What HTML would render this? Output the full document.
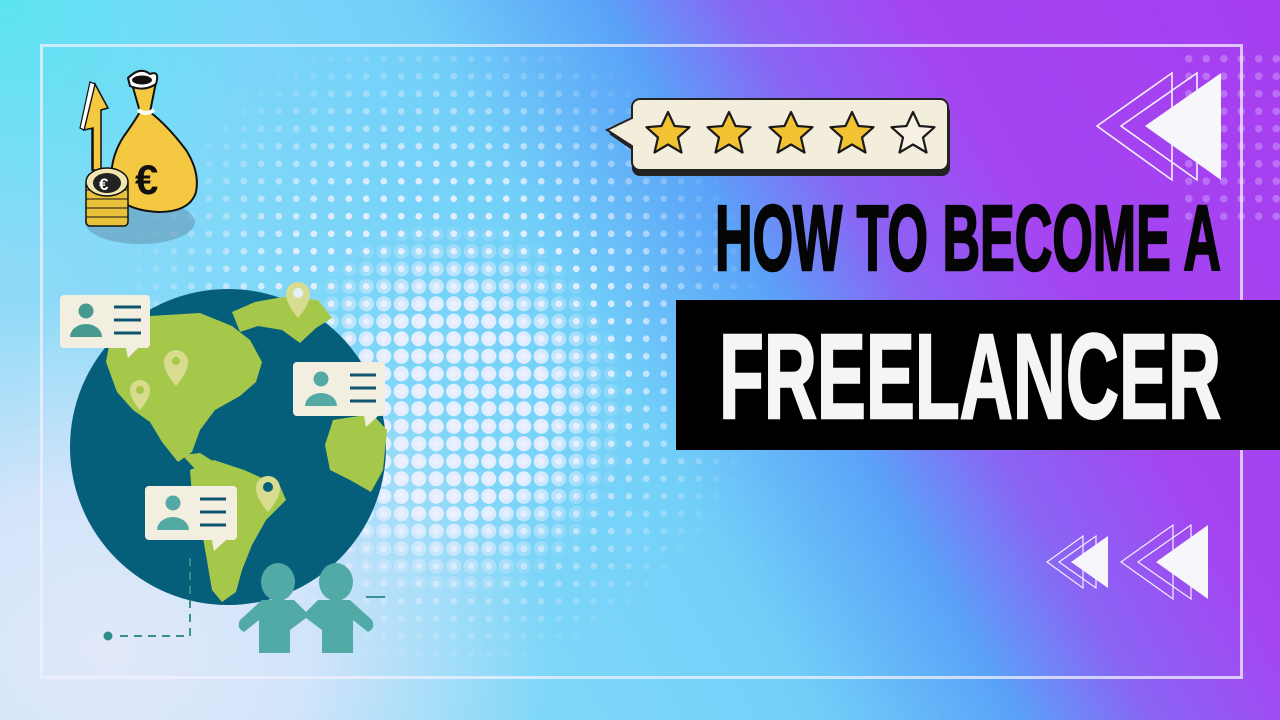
<!DOCTYPE html>
<html><head><meta charset="utf-8"><style>
html,body{margin:0;padding:0}
body{width:1280px;height:720px;overflow:hidden;position:relative;font-family:"Liberation Sans",sans-serif;
background:
radial-gradient(ellipse 440px 360px at 110px 650px, rgba(225,232,250,1) 0%, rgba(222,230,250,.85) 45%, rgba(222,230,250,0) 100%),
radial-gradient(ellipse 260px 260px at 0px 0px, rgba(80,230,240,.8), rgba(80,230,240,0) 100%),
linear-gradient(60deg, #9adcf8 0%, #80d8f8 30%, #72d0f8 48%, #5aa2f8 60%, #8a64f4 68%, #a445f1 78%, #a63ef0 100%);}
.dots{position:absolute;}
#d1{left:130px;top:50px;width:640px;height:670px;
background:radial-gradient(circle at 8.75px 8.75px, rgba(236,240,255,.92) 3px, transparent 3.6px);background-size:17.5px 17.5px;
-webkit-mask-image:radial-gradient(ellipse 330px 330px at 310px 300px,#000 50%,transparent 100%);mask-image:radial-gradient(ellipse 330px 330px at 310px 300px,#000 50%,transparent 100%);}
#d2{left:130px;top:50px;width:640px;height:670px;
background:radial-gradient(circle at 8.75px 8.75px, rgba(236,240,255,.92) 7.2px, transparent 7.9px);background-size:17.5px 17.5px;
-webkit-mask-image:radial-gradient(ellipse 240px 260px at 320px 360px,#000 40%,transparent 75%);mask-image:radial-gradient(ellipse 240px 260px at 320px 360px,#000 40%,transparent 75%);}
#d3{left:1180px;top:50px;width:100px;height:170px;
background:radial-gradient(circle at 8.75px 8.75px, rgba(236,220,255,.3) 3.5px, transparent 4px);background-size:17.5px 17.5px;}
svg{position:absolute;left:0;top:0}
</style></head><body>
<div class="dots" id="d1"></div>
<div class="dots" id="d2"></div>
<div class="dots" id="d3"></div>
<svg width="1280" height="720" viewBox="0 0 1280 720">
<rect x="41.5" y="45.5" width="1200" height="632" fill="none" stroke="rgba(240,240,255,.75)" stroke-width="3"/>
<rect x="676" y="300" width="604" height="150" fill="#000"/>
<text x="715" y="270" font-family="Liberation Sans" font-weight="bold" font-size="93" textLength="506" lengthAdjust="spacingAndGlyphs" fill="#050505" stroke="#050505" stroke-width="2.5">HOW TO BECOME A</text>
<text x="719" y="418" font-family="Liberation Sans" font-weight="bold" font-size="121" textLength="502" lengthAdjust="spacingAndGlyphs" fill="#f5f5f5" stroke="#f5f5f5" stroke-width="2.5">FREELANCER</text>
<g>
<path d="M640 104 H942 a8 8 0 0 1 8 8 V168 a8 8 0 0 1 -8 8 H640 a8 8 0 0 1 -8 -8 V150 L609 134 L632 124 V112 a8 8 0 0 1 8 -8Z" fill="#222"/>
<path d="M640 99 H940 a8 8 0 0 1 8 8 V162 a8 8 0 0 1 -8 8 H640 a8 8 0 0 1 -8 -8 V146 L607 130 L632 118 V107 a8 8 0 0 1 8 -8Z" fill="#f3eddb" stroke="#222" stroke-width="2"/>
<g stroke="#1a1a1a" stroke-width="2.2" stroke-linejoin="round">
<path d="M0 -22 L6.5 -8 L21.5 -6.8 L10 3.5 L13.5 18.5 L0 10.5 L-13.5 18.5 L-10 3.5 L-21.5 -6.8 L-6.5 -8Z" fill="#f2c233" transform="translate(668,134)"/>
<path d="M0 -22 L6.5 -8 L21.5 -6.8 L10 3.5 L13.5 18.5 L0 10.5 L-13.5 18.5 L-10 3.5 L-21.5 -6.8 L-6.5 -8Z" fill="#f2c233" transform="translate(729,134)"/>
<path d="M0 -22 L6.5 -8 L21.5 -6.8 L10 3.5 L13.5 18.5 L0 10.5 L-13.5 18.5 L-10 3.5 L-21.5 -6.8 L-6.5 -8Z" fill="#f2c233" transform="translate(791,134)"/>
<path d="M0 -22 L6.5 -8 L21.5 -6.8 L10 3.5 L13.5 18.5 L0 10.5 L-13.5 18.5 L-10 3.5 L-21.5 -6.8 L-6.5 -8Z" fill="#f2c233" transform="translate(852,134)"/>
<path d="M0 -22 L6.5 -8 L21.5 -6.8 L10 3.5 L13.5 18.5 L0 10.5 L-13.5 18.5 L-10 3.5 L-21.5 -6.8 L-6.5 -8Z" fill="#f6f1e2" transform="translate(913,134)"/>
</g></g>
<g fill="none" stroke="#f4f0ff" stroke-width="1.6">
<path d="M1097 126 L1172 73 L1172 180 Z"/>
<path d="M1121 126 L1197 73 L1197 180 Z"/>
</g>
<path d="M1145 126 L1221 73 L1221 180 Z" fill="#f7f6fb"/>
<g fill="none" stroke="#f4f0ff" stroke-width="1.2">
<path d="M1047 562 L1083 536 L1083 588 Z"/>
<path d="M1059 562 L1096 536 L1096 588 Z"/>
<path d="M1121 562 L1173 525 L1173 599 Z"/>
<path d="M1138 562 L1191 525 L1191 599 Z"/>
</g>
<path d="M1071 562 L1108 536 L1108 588 Z" fill="#f7f6fb"/>
<path d="M1156 562 L1208 525 L1208 599 Z" fill="#f7f6fb"/>
<!-- money bag -->
<ellipse cx="140" cy="222" rx="55" ry="22" fill="rgba(90,120,150,.4)"/>
<path d="M92 128 L100 128 L100 170 L92 170Z" fill="#d23a2a" stroke="#111" stroke-width="1.5"/>
<path d="M84 130 L95 84 L108 108 L101 110 L101 170 L93 170 L93 128Z" fill="#f5c842" stroke="#111" stroke-width="1.5"/>
<path d="M84 130 L95 84 L90 82 L80 128Z" fill="#fff" stroke="#111" stroke-width="1.2"/>
<path d="M132 84 Q145 76 156 82 L150 112 Q168 126 186 150 Q200 172 196 192 Q190 212 158 212 Q122 210 112 190 Q108 160 124 136 Q134 122 140 112 Z" fill="#f5c842" stroke="#111" stroke-width="2"/>
<path d="M128 78 Q140 66 150 74 Q160 70 156 84 Q144 92 130 86 Z" fill="#fff" stroke="#111" stroke-width="2"/>
<ellipse cx="142" cy="80" rx="10" ry="4.5" fill="#111"/>
<path d="M138 110 Q146 116 154 110" stroke="#fff" stroke-width="4" fill="none"/>
<text x="135" y="194" font-family="Liberation Sans" font-weight="bold" font-size="42" fill="#111">€</text>
<rect x="86" y="180" width="42" height="46" rx="4" fill="#e8c23a" stroke="#111" stroke-width="1.5"/>
<g stroke="#111" stroke-width="1"><line x1="86" y1="190" x2="128" y2="190"/><line x1="86" y1="199" x2="128" y2="199"/><line x1="86" y1="208" x2="128" y2="208"/><line x1="86" y1="217" x2="128" y2="217"/></g>
<ellipse cx="107" cy="182" rx="21" ry="14" fill="#f2e6b0" stroke="#111" stroke-width="1.5"/>
<ellipse cx="107" cy="183" rx="14" ry="10" fill="#222"/>
<text x="99" y="190" font-family="Liberation Sans" font-weight="bold" font-size="17" fill="#fff">€</text>
<!-- globe -->
<circle cx="228" cy="447" r="158" fill="#055e7a"/>
<g fill="#a6c84a">
<path d="M112 330 L150 316 L200 313 L232 326 L250 340 L262 362 L256 382 L240 396 L215 410 L200 430 L192 452 L178 462 L162 442 L150 422 L133 410 L117 392 L106 362Z"/>
<path d="M232 312 L255 302 L283 297 L318 300 L332 318 L316 328 L300 343 L282 330 L258 326 L240 332Z"/>
<path d="M182 455 L200 453 L224 468 L214 476 L196 470Z"/>
<path d="M190 470 L214 460 L244 470 L280 486 L286 500 L266 520 L252 545 L242 570 L236 592 L222 602 L212 590 L206 555 L200 520 L192 495Z"/>
<path d="M333 420 L372 414 L387 430 L383 470 L371 492 L350 480 L330 470 L325 445Z"/>
</g>
<g fill="#d8dc8e">
<path d="M298 318 q-12 -14 -12 -24 a12 12 0 0 1 24 0 q0 10 -12 24Z"/>
<path d="M176 386 q-12 -14 -12 -24 a12 12 0 0 1 24 0 q0 10 -12 24Z"/>
<path d="M140 410 q-10 -12 -10 -20 a10 10 0 0 1 20 0 q0 8 -10 20Z"/>
<path d="M268 512 q-12 -14 -12 -24 a12 12 0 0 1 24 0 q0 10 -12 24Z"/>
</g>
<circle cx="298" cy="293" r="5" fill="#e4f0fa"/><circle cx="176" cy="361" r="4" fill="#a6c84a"/><circle cx="140" cy="390" r="4" fill="#a6c84a"/><circle cx="268" cy="487" r="5" fill="#055e7a"/>
<g>
<path d="M64 295 H146 a4 4 0 0 1 4 4 V344 a4 4 0 0 1 -4 4 H138 L128 358 L126 348 H64 a4 4 0 0 1 -4 -4 V299 a4 4 0 0 1 4 -4Z" fill="#f3efe0"/>
<circle cx="86" cy="311" r="7.5" fill="#45998f"/><path d="M70 337 a16 13 0 0 1 32 0Z" fill="#45998f"/>
<g stroke="#0d5470" stroke-width="3"><line x1="114" y1="307" x2="141" y2="307"/><line x1="114" y1="320" x2="141" y2="320"/><line x1="114" y1="333" x2="141" y2="333"/></g>
</g>
<g>
<path d="M297 362 H381 a4 4 0 0 1 4 4 V412 a4 4 0 0 1 -4 4 H378 L366 427 L364 416 H297 a4 4 0 0 1 -4 -4 V366 a4 4 0 0 1 4 -4Z" fill="#f3efe0"/>
<circle cx="321" cy="379" r="7.5" fill="#53aaa5"/><path d="M305 406 a16 13 0 0 1 32 0Z" fill="#53aaa5"/>
<g stroke="#0d5470" stroke-width="3"><line x1="350" y1="375" x2="376" y2="375"/><line x1="350" y1="388" x2="376" y2="388"/><line x1="350" y1="401" x2="376" y2="401"/></g>
</g>
<g>
<path d="M149 486 H233 a4 4 0 0 1 4 4 V536 a4 4 0 0 1 -4 4 H226 L214 551 L212 540 H149 a4 4 0 0 1 -4 -4 V490 a4 4 0 0 1 4 -4Z" fill="#f3efe0"/>
<circle cx="173" cy="503" r="7.5" fill="#53aaa5"/><path d="M157 530 a16 13 0 0 1 32 0Z" fill="#53aaa5"/>
<g stroke="#0d5470" stroke-width="3"><line x1="200" y1="499" x2="226" y2="499"/><line x1="200" y1="512" x2="226" y2="512"/><line x1="200" y1="525" x2="226" y2="525"/></g>
</g>
<circle cx="108" cy="636" r="4.5" fill="#2f8c88"/>
<path d="M120 636 H190 V552" fill="none" stroke="#3a8e8c" stroke-width="2" stroke-dasharray="8 6"/>
<path d="M366 597 H385" stroke="#3a8e8c" stroke-width="2"/>
<g fill="#52aaa6">
<ellipse cx="278" cy="582" rx="17" ry="19"/>
<ellipse cx="336" cy="582" rx="17" ry="19"/>
<path d="M262 600 H294 L306 612 L318 600 H350 L372 620 Q376 628 368 632 L353 620 V653 H322 V630 L306 618 L290 630 V653 H259 V620 L244 632 Q236 628 240 620Z"/>
</g>
</svg>
</body></html>
